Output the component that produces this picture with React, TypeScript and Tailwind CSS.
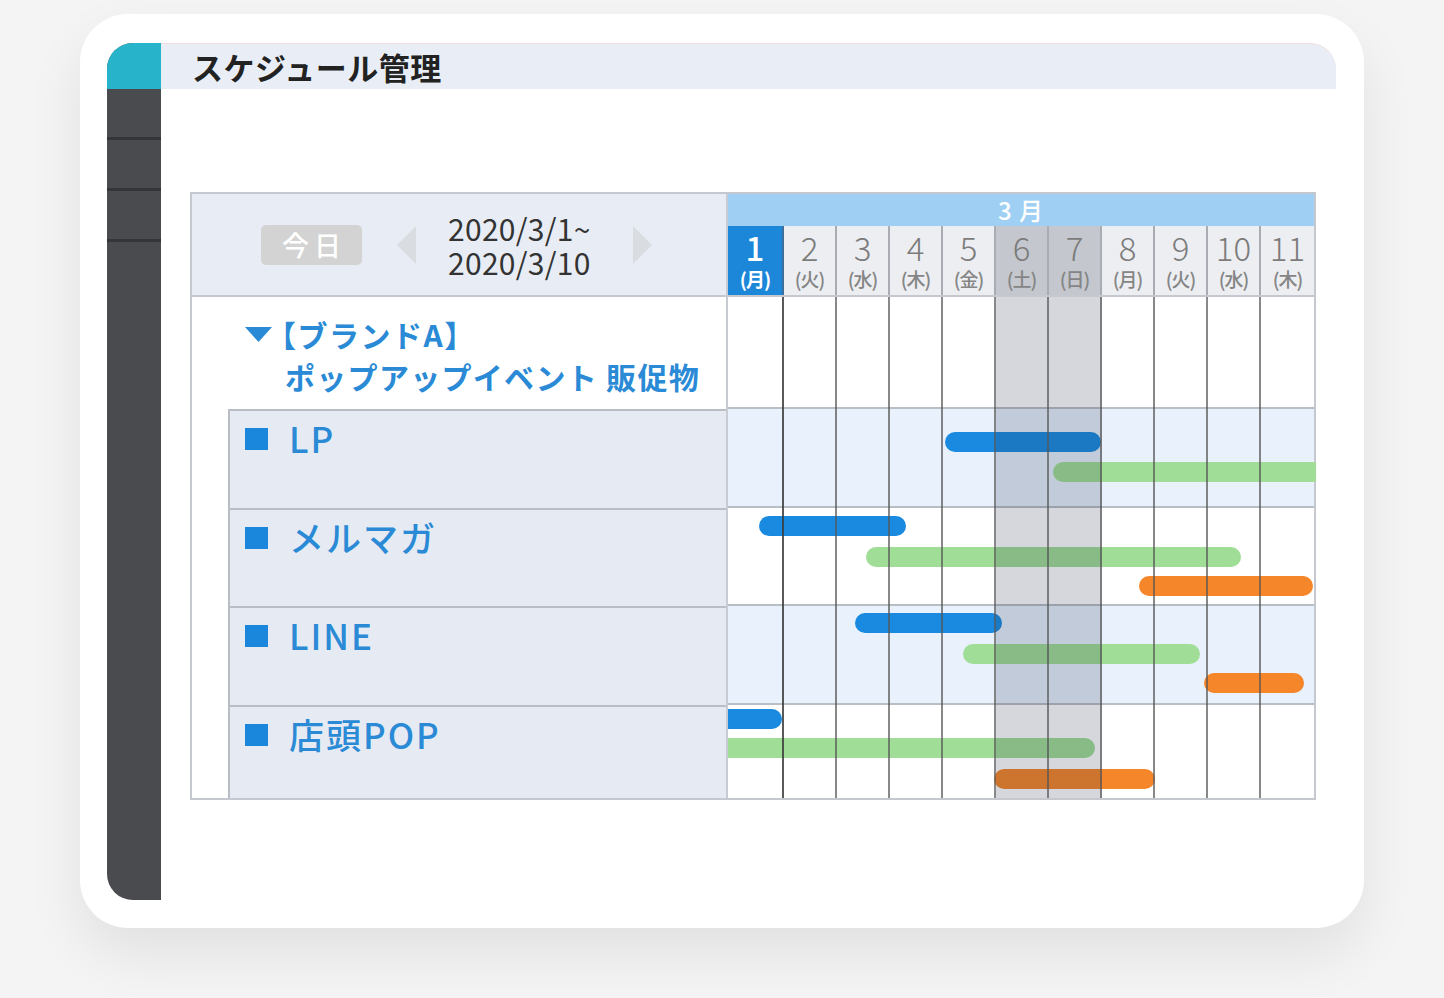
import React from 'react';

const JP = '"Noto Sans CJK JP", "Noto Sans", sans-serif';

const days: [string, string][] = [
  ['1', '月'], ['2', '火'], ['3', '水'], ['4', '木'], ['5', '金'], ['6', '土'],
  ['7', '日'], ['8', '月'], ['9', '火'], ['10', '水'], ['11', '木'],
];

type Bar = { l: number; w: number; t: number; c: 'b' | 'g' | 'o'; sl?: boolean; sr?: boolean };
type Row = { label: string | null; h: number; bg: string; bars: Bar[] };

const rows: Row[] = [
  { label: null, h: 112, bg: 'bg-white', bars: [] },
  {
    label: 'LP', h: 99, bg: 'bg-[#e8f1fc]',
    bars: [
      { l: 217, w: 156, t: 23, c: 'b' },
      { l: 325, w: 263, t: 53, c: 'g', sr: true },
    ],
  },
  {
    label: 'メルマガ', h: 98, bg: 'bg-white',
    bars: [
      { l: 31, w: 147, t: 8, c: 'b' },
      { l: 138, w: 375, t: 39, c: 'g' },
      { l: 411, w: 174, t: 68, c: 'o' },
    ],
  },
  {
    label: 'LINE', h: 99, bg: 'bg-[#e8f1fc]',
    bars: [
      { l: 127, w: 147, t: 7, c: 'b' },
      { l: 235, w: 237, t: 38, c: 'g' },
      { l: 476, w: 100, t: 67, c: 'o' },
    ],
  },
  {
    label: '店頭POP', h: 93, bg: 'bg-white',
    bars: [
      { l: 0, w: 54, t: 4, c: 'b', sl: true },
      { l: 0, w: 367, t: 33, c: 'g', sl: true },
      { l: 266, w: 161, t: 64, c: 'o' },
    ],
  },
];

const barColor: Record<string, string> = {
  b: 'bg-[#1a8ae0]',
  g: 'bg-[#a0dd96]',
  o: 'bg-[#f5862a]',
};

function BarEl({ bar }: { bar: Bar }) {
  const round = bar.sl && bar.sr ? '' : bar.sl ? 'rounded-r-[10px]' : bar.sr ? 'rounded-l-[10px]' : 'rounded-[10px]';
  return (
    <div
      className={`absolute h-[20px] ${barColor[bar.c]} ${round}`}
      style={{ left: bar.l, width: bar.w, top: bar.t }}
    />
  );
}

function TriLeft() {
  return (
    <svg width="19" height="38" viewBox="0 0 19 38">
      <path d="M19 0 L19 38 L0 19 Z" fill="#d9dce1" />
    </svg>
  );
}
function TriRight() {
  return (
    <svg width="19" height="38" viewBox="0 0 19 38">
      <path d="M0 0 L0 38 L19 19 Z" fill="#d9dce1" />
    </svg>
  );
}

const cols = 'grid grid-cols-[56px_repeat(10,minmax(0,1fr))]';

export default function App() {
  return (
    <div className="w-full h-[998px] bg-[#f4f4f4] pt-[14px] pl-[80px] overflow-hidden" style={{ fontFamily: JP }}>
      <div className="w-[1284px] h-[914px] rounded-[48px] bg-white shadow-[0_26px_56px_rgba(0,0,0,0.08)] pt-[29px] pl-[27px]">
        <div className="w-[1229px] h-[857px] flex">
          {/* Sidebar */}
          <div className="w-[54px] h-full rounded-l-[26px] overflow-hidden bg-[#4a4b4f] flex flex-col">
            <div className="h-[46px] bg-[#27b4ca]" />
            <div className="h-[51px] border-b-[3px] border-[#343538]" />
            <div className="h-[51px] border-b-[3px] border-[#343538]" />
            <div className="h-[51px] border-b-[3px] border-[#343538]" />
          </div>

          {/* Main */}
          <div className="flex-1 flex flex-col">
            <div className="h-[46px] bg-[#e9eef6] rounded-tr-[26px] border-t border-[#f2dede] flex items-center pl-[31px]">
              <span className="text-[31px] font-bold text-[#222] leading-none tracking-[0.5px]">スケジュール管理</span>
            </div>

            <div className="ml-[29px] mt-[103px] w-[1126px] border-2 border-[#c5c9cf] flex">
              {/* Left panel */}
              <div className="w-[536px] border-r-2 border-[#c8ccd2] flex flex-col">
                <div className="h-[103px] bg-[#e8edf5] border-b-2 border-[#c5c9cf] flex items-center pl-[69px]">
                  <div className="w-[101px] h-[40px] rounded-[5px] bg-[#d3d3d3] flex items-center justify-center">
                    <span className="text-white text-[27px] leading-none font-medium tracking-[5px] pl-[5px]">今日</span>
                  </div>
                  <div className="ml-[35px]"><TriLeft /></div>
                  <div className="ml-[32px] text-[#333] text-[30px] leading-[34px] w-[155px] tracking-[0.3px]">
                    <div>2020/3/1~</div>
                    <div>2020/3/10</div>
                  </div>
                  <div className="ml-[30px]"><TriRight /></div>
                </div>

                <div className="h-[112px] bg-white pl-[53px] pt-[16px] text-[#2a8ad6] font-bold text-[30px] leading-[42px]">
                  <div className="flex items-center">
                    <svg width="27" height="15" viewBox="0 0 27 15" className="shrink-0">
                      <path d="M0 0 L27 0 L13.5 15 Z" fill="#2a8ad6" />
                    </svg>
                    <span className="ml-[-6px] tracking-[1.5px]">【ブランドA】</span>
                  </div>
                  <div className="pl-[40px] tracking-[1.3px]">ポップアップイベント 販促物</div>
                </div>

                <div className="ml-[36px] border-l-2 border-[#b9bdc4] bg-[#e6ebf3] flex flex-col">
                  {rows.slice(1).map((r, i) => (
                    <div
                      key={i}
                      className="border-t-2 border-[#b9bdc4] flex items-start pl-[15px] pt-[9px]"
                      style={{ height: r.h }}
                    >
                      <div className="w-[23px] h-[22px] bg-[#1a87dc] mt-[8px] shrink-0" />
                      <span className="ml-[21px] text-[35px] leading-none font-medium text-[#2a8ad6] tracking-[2px]">
                        {r.label}
                      </span>
                    </div>
                  ))}
                </div>
              </div>

              {/* Calendar */}
              <div className="flex-1 flex flex-col">
                <div className="h-[103px] flex flex-col border-b-2 border-[#c5c9cf]">
                  <div className="h-[32px] bg-[#9fd0f4] flex items-center justify-center">
                    <span className="text-white text-[24px] leading-none font-medium tracking-[1px]">3 月</span>
                  </div>
                  <div className={`${cols} flex-1`}>
                    {days.map(([d, w], i) => {
                      const first = i === 0;
                      const weekend = i === 5 || i === 6;
                      const bg = first ? 'bg-[#1c87d9]' : weekend ? 'bg-[#c4c8ce]' : 'bg-[#eceef2]';
                      const border = i === 10 ? '' : first ? 'border-r-2 border-[#3d6f9a]' : 'border-r-2 border-[#a9adb3]';
                      return (
                        <div key={i} className={`${bg} ${border} flex flex-col items-center pt-[5px]`}>
                          <span className={`text-[33px] leading-[32px] ${first ? 'text-white font-medium' : 'text-[#7c7c7c] font-light'}`}>
                            {d}
                          </span>
                          <span className={`mt-[6px] text-[19px] leading-[20px] tracking-[-1px] ${first ? 'text-white font-bold' : 'text-[#858585] font-medium'}`}>
                            ({w})
                          </span>
                        </div>
                      );
                    })}
                  </div>
                </div>

                <div className="relative flex flex-col">
                  {rows.map((r, i) => (
                    <div
                      key={i}
                      className={`relative ${r.bg} ${i < rows.length - 1 ? 'border-b-2 border-[#b9bdc4]' : ''}`}
                      style={{ height: r.h }}
                    >
                      {r.bars.map((b, j) => (
                        <BarEl key={j} bar={b} />
                      ))}
                    </div>
                  ))}
                  {/* grid lines + weekend shade overlay */}
                  <div className={`absolute inset-0 ${cols} pointer-events-none`}>
                    {days.map((_, i) => {
                      const weekend = i === 5 || i === 6;
                      const border = i === 10 ? '' : i === 0 ? 'border-r-2 border-[#3c3c3c]/85' : 'border-r-2 border-[#555]/70';
                      return (
                        <div key={i} className={`${border} ${weekend ? 'bg-[#1f2d45]/[0.19]' : ''}`} />
                      );
                    })}
                  </div>
                </div>
              </div>
            </div>
          </div>
        </div>
      </div>
    </div>
  );
}
